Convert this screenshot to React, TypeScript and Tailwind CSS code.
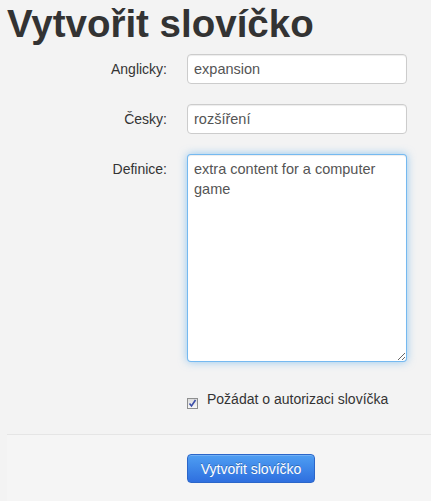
import { useEffect, useRef } from 'react';

export default function App() {
  const areaRef = useRef<HTMLTextAreaElement>(null);

  useEffect(() => {
    const el = areaRef.current;
    if (el) {
      el.focus();
      el.setSelectionRange(el.value.length, el.value.length);
    }
  }, []);

  return (
    <main className="min-h-screen bg-[#f3f3f3] font-['Liberation_Sans',Arial,sans-serif] text-[14px] leading-5 text-[#333] overflow-hidden">
      <div className="pl-[7px]">
        <h1 className="mt-[4px] mb-[10px] text-[38.5px] leading-[40px] font-bold text-[#333]">Vytvořit slovíčko</h1>

        <form className="flex flex-col" onSubmit={(e) => e.preventDefault()}>
          {/* Anglicky */}
          <div className="flex mb-5">
            <label className="w-[160px] text-right pt-[5px]">Anglicky:</label>
            <input
              defaultValue="expansion"
              className="ml-[20px] w-[220px] h-[30px] px-[6px] py-1 bg-white border border-[#ccc] rounded text-[14.5px] text-[#555] shadow-[inset_0_1px_1px_rgba(0,0,0,0.075)] outline-none"
            />
          </div>

          {/* Česky */}
          <div className="flex mb-5">
            <label className="w-[160px] text-right pt-[5px]">Česky:</label>
            <input
              defaultValue="rozšíření"
              className="ml-[20px] w-[220px] h-[30px] px-[6px] py-1 bg-white border border-[#ccc] rounded text-[14.5px] text-[#555] shadow-[inset_0_1px_1px_rgba(0,0,0,0.075)] outline-none"
            />
          </div>

          {/* Definice */}
          <div className="flex mb-5">
            <label className="w-[160px] text-right pt-[5px]">Definice:</label>
            <textarea
              ref={areaRef}
              defaultValue="extra content for a computer game"
              className="ml-[20px] w-[220px] h-[208px] px-[6px] py-1 bg-white border border-[rgba(82,168,236,0.8)] rounded text-[14.5px] text-[#555] leading-5 shadow-[inset_0_1px_1px_rgba(0,0,0,0.075),0_0_8px_rgba(82,168,236,0.6)] outline-none resize-y caret-[#333]"
            />
          </div>

          {/* checkbox */}
          <div className="flex items-start pl-[180px] pt-[7px]">
            <span className="mt-[9px] w-[11px] h-[11px] border border-[#8e8f8f] bg-gradient-to-b from-[#dcdcdc] to-[#f8f8f8] flex items-center justify-center shrink-0">
              <svg width="9" height="9" viewBox="0 0 9 9">
                <path d="M1.5 4.5 L3.5 7 L7.5 1" fill="none" stroke="#3b4ea8" strokeWidth="1.6" />
              </svg>
            </span>
            <span className="ml-[9px] text-[14px]">Požádat o autorizaci slovíčka</span>
          </div>

          {/* actions */}
          <div className="mt-[25px] border-t border-[#e5e5e5] bg-[#f5f5f5] pt-[19px] pb-5 pl-[180px]">
            <button
              type="submit"
              className="h-[29px] w-[128px] rounded bg-gradient-to-b from-[#4f9ef2] to-[#2f6fdf] border border-[#2b66c9] text-white text-[14px] shadow-[inset_0_1px_0_rgba(255,255,255,0.2)] [text-shadow:0_-1px_0_rgba(0,0,0,0.25)]"
            >
              Vytvořit slovíčko
            </button>
          </div>
        </form>
      </div>
    </main>
  );
}
